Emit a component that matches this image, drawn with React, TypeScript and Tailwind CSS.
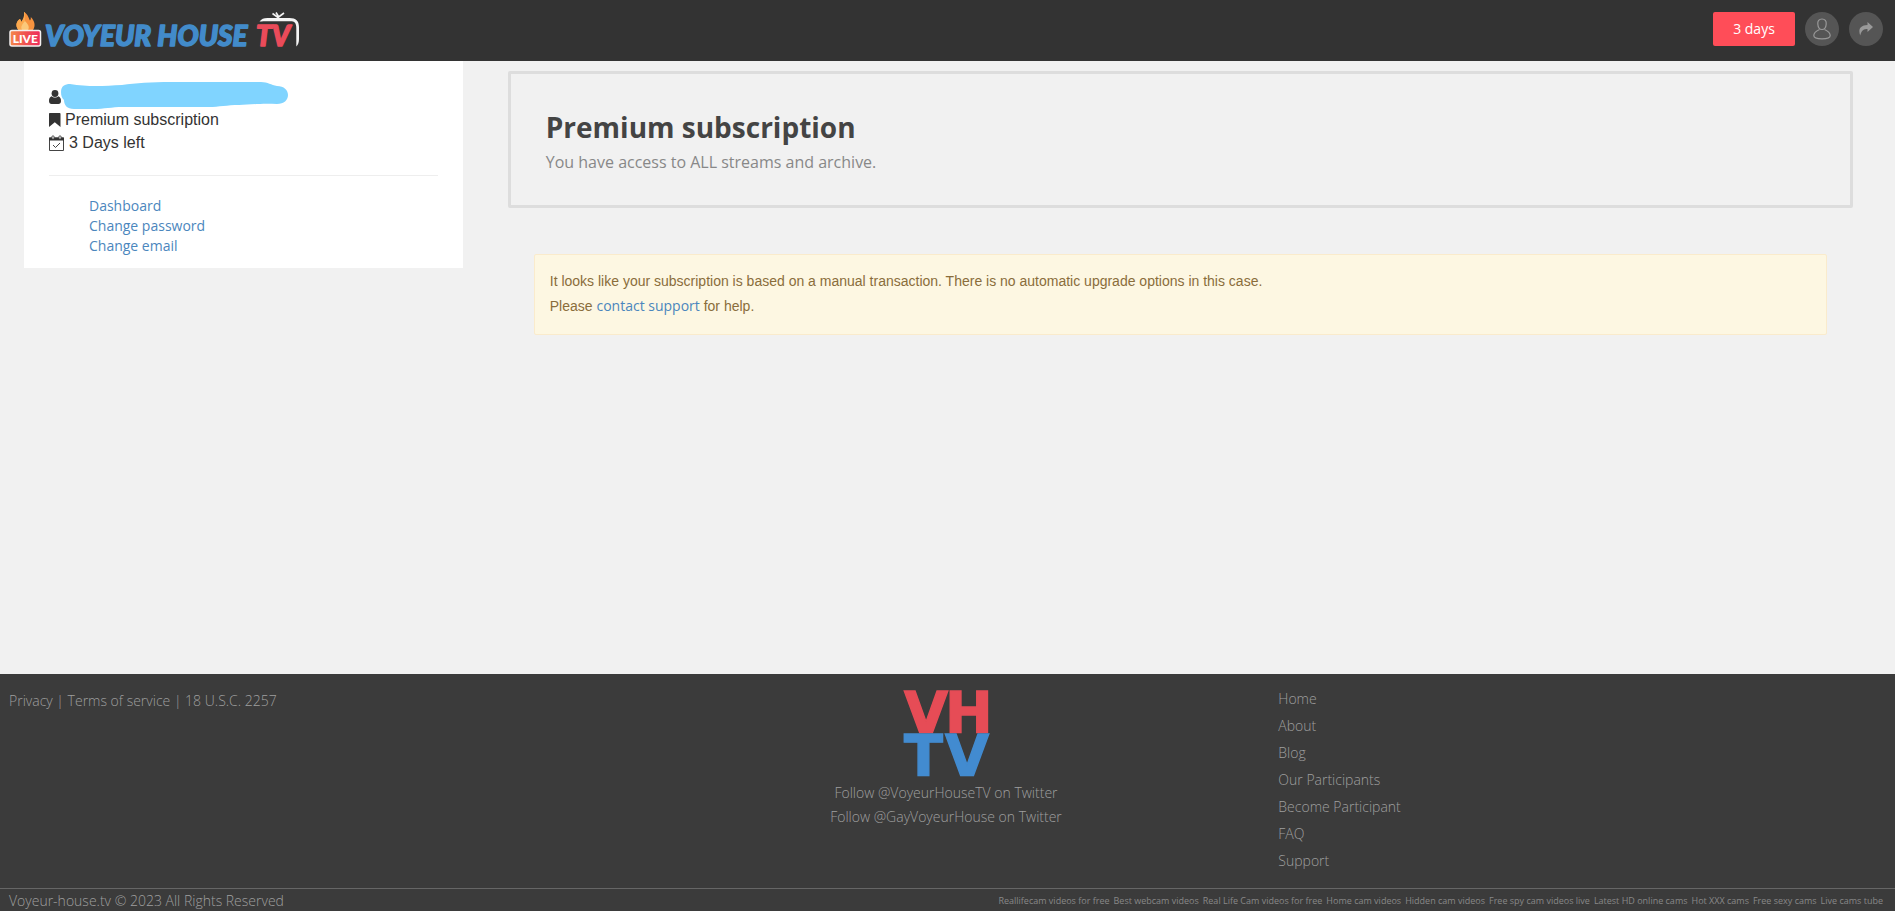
const accountLinks = ['Dashboard', 'Change password', 'Change email'];

const footerLinks = ['Home', 'About', 'Blog', 'Our Participants', 'Become Participant', 'FAQ', 'Support'];

const partnerLinks = [
  'Reallifecam videos for free',
  'Best webcam videos',
  'Real Life Cam videos for free',
  'Home cam videos',
  'Hidden cam videos',
  'Free spy cam videos live',
  'Latest HD online cams',
  'Hot XXX cams',
  'Free sexy cams',
  'Live cams tube',
];

function Logo() {
  return (
    <svg width="300" height="52" viewBox="0 0 300 52" role="img" aria-label="Voyeur House TV">
      <defs>
        <linearGradient id="live" x1="0" x2="1">
          <stop offset="0" stopColor="#f58a4b" />
          <stop offset="0.5" stopColor="#f0524f" />
          <stop offset="1" stopColor="#ee2a5c" />
        </linearGradient>
      </defs>
      {/* Flame */}
      <path d="M24 12c4.500 3 4.500 6 6 8.500.7-1 1-2 .8-3.500 4 4 5 9 2.200 13H18.500c-4-5-1.500-9 1.500-11 .8 1 1.200 2 1.200 3 2.300-3 3.300-6 2.800-10z" fill="#f7933f" />
      <path d="M24 12c.8 4-.5 7-2.800 10 0-1-.4-2-1.200-3-3 2-5.500 6-1.500 11H25V12.800z" fill="#fba94f" />
      <path d="M25 21c3 3 5 6 3 9h-6c-2-4 1-6 3-9z" fill="#fbc87a" />
      <rect x="10" y="30.500" width="30.500" height="15.500" rx="2" fill="url(#live)" stroke="#f4f0f0" strokeWidth="1.500" />
      <text x="25.300" y="43" textAnchor="middle" fontFamily="Lato, sans-serif" fontWeight="900" fontSize="12" fill="#fff">LIVE</text>
      {/* Wordmark */}
      <g fontFamily="Lato, sans-serif" fontStyle="italic" fontWeight="900" fontSize="28" strokeWidth="1.500" strokeLinejoin="round">
        <text x="45" y="46" fill="#428bca" stroke="#428bca">VOYEUR HOUSE</text>
        <text x="256" y="46" fill="#ea4b5a" stroke="#ea4b5a">TV</text>
      </g>
      {/* TV set outline and antenna */}
      <path d="M259.500 21.500c2-2.500 4-3.500 8-3.500h22c6.500 0 9.500 3 9.500 9v12c0 3-.7 5.500-2.700 7.500V28c0-5-1.500-6.800-6.300-6.800h-22c-3.500 0-6 0-8.500.3z" fill="#f4f4f4" />
      <path d="M272.500 13.500l5.500 4 6-4.500M276 12.500l2.500 4" fill="none" stroke="#f4f4f4" strokeWidth="1.600" />
    </svg>
  );
}

function FooterLogo() {
  return (
    <svg className="overflow-visible" width="88" height="88" viewBox="0 0 88 88" role="img" aria-label="VHTV" fontFamily="DejaVu Sans, sans-serif" fontWeight="700" fontSize="57">
      <g strokeWidth="1.400">
        <text y="43" fill="#e64c56" stroke="#e64c56"><tspan x="2">V</tspan><tspan x="43">H</tspan></text>
        <text y="86" fill="#428bd0" stroke="#428bd0"><tspan x="2">T</tspan><tspan x="43">V</tspan></text>
      </g>
    </svg>
  );
}

function UserIcon() {
  return (
    <svg width="12" height="14" viewBox="0 0 12 14" fill="#333">
      <circle cx="6" cy="3.500" r="3.400" />
      <path d="M2.600 6.200C.8 6.800 0 8.500 0 11c0 2 1 3 2.600 3h6.800c1.600 0 2.600-1 2.600-3 0-2.500-.8-4.200-2.600-4.800C8.500 7.100 7.400 7.600 6 7.600s-2.500-.5-3.400-1.400z" />
    </svg>
  );
}

function BookmarkIcon() {
  return (
    <svg width="12" height="14" viewBox="0 0 12 14" fill="#333">
      <path d="M1 0h9.500c.6 0 1 .4 1 1v13L5.800 9.200 0 14V1c0-.6.4-1 1-1z" />
    </svg>
  );
}

function CalendarIcon() {
  return (
    <svg width="15" height="16" viewBox="0 0 15 16" fill="none" stroke="#444">
      <path d="M0.500 3h14v12.500h-14z" />
      <path d="M0 2.500h15v3H0z" fill="#333" stroke="none" />
      <path d="M3 1h2v3H3zM10 1h2v3h-2z" fill="#fff" strokeWidth="0.800" />
      <path d="M4 10l2.500 2.500L11 8" />
    </svg>
  );
}

export default function App() {
  return (
    <div className="min-h-screen flex flex-col bg-[#f1f1f1] font-['Open_Sans',sans-serif] text-sm text-[#333]">
      <header className="h-[61px] shrink-0 flex items-start justify-between bg-[#333] pr-3">
        <a href="#">
          <Logo />
        </a>
        <div className="flex items-center gap-[10px] pt-3">
          <button className="w-[82px] h-[34px] rounded-xs bg-[#ff4d58] text-white font-medium">3 days</button>
          <button aria-label="Account" className="size-[34px] rounded-full bg-[#555] flex items-center justify-center">
            <svg width="18" height="22" viewBox="0 0 18 22" fill="none" stroke="#999" strokeWidth="1.200">
              <path d="M9 1c3 0 4.500 2 4.200 5-.2 3-1.900 5.500-4.200 5.500S5 9 4.800 6C4.500 3 6 1 9 1z" />
              <path d="M6.500 11.500C3 13 .8 14.500.8 17.500c0 2 2 3.300 8.200 3.300s8.200-1.300 8.200-3.300c0-3-2.200-4.500-5.700-6" />
            </svg>
          </button>
          <button aria-label="Share" className="size-[34px] rounded-full bg-[#555] flex items-center justify-center">
            <svg width="14" height="14" viewBox="0 0 14 14" fill="#999">
              <path d="M8.500 0L14 5 8.500 10V7C5 7 2.500 8 1.200 13.500-.8 8 .5 3.200 8.500 3z" />
            </svg>
          </button>
        </div>
      </header>

      <div className="flex-1 flex items-start">
        {/* Account */}
        <aside className="w-1/4 shrink-0 pl-6 pr-[11px]">
          <div className="bg-white px-[25px] pt-6 pb-3">
            <ul className="font-['Liberation_Sans',sans-serif] text-base leading-[23px]">
              <li className="flex items-center h-[23px]">
                <UserIcon />
                <svg className="-mt-1.5 -mb-1" width="228" height="28" viewBox="0 0 228 28">
                  <path d="M0 10C0 4 4 2 9 2c18 3 34 2 52 1C75 1 90 0 110 0h90c7 0 10 3 16 4 7 0 11 4 11 9s-4 9-11 9c-18-1-28 1-38 1-12 0-20 2-30 2H62c-12 0-18 2-30 2H13C6 27 3 23 3 18 1 16 0 14 0 10z" fill="#80d4ff" />
                </svg>
              </li>
              <li className="flex items-center gap-1">
                <BookmarkIcon />
                Premium subscription
              </li>
              <li className="flex items-center gap-[5px]">
                <CalendarIcon />
                3 Days left
              </li>
            </ul>
            <hr className="mt-[21px] mb-5 border-[#eee]" />
            <ul className="pl-10 leading-5 text-[#4b86bd]">
              {accountLinks.map(label => (
                <li key={label}><a href="#">{label}</a></li>
              ))}
            </ul>
          </div>
        </aside>

        {/* Subscription */}
        <main className="flex-1 pl-[34px] pr-[42px] pt-[10px]">
          <section className="rounded-xs border-3 border-[#ddd] px-[35px] pt-[35px] pb-[31px]">
            <h1 className="text-[28px] leading-9 font-bold text-[#444]">Premium subscription</h1>
            <p className="mt-[5px] text-base text-[#888]">You have access to ALL streams and archive.</p>
          </section>
          <div className="mx-[26px] mt-[46px] rounded-xs border border-[#faebcc] bg-[#fdf7e2] px-[15px] pt-[14px] pb-[15px] font-['Liberation_Sans',sans-serif] leading-[25px] text-[#8a6d3b]">
            <p>It looks like your subscription is based on a manual transaction. There is no automatic upgrade options in this case.</p>
            <p>
              Please <a href="#" className="font-['Open_Sans',sans-serif] leading-none text-[#4b86bd]">contact support</a> for help.
            </p>
          </div>
        </main>
      </div>

      <footer className="bg-[#3b3b3b] font-light text-[#9f9f9f]">
        <div className="grid grid-cols-3 pb-[14px]">
          <div className="pl-[9px] pt-[13px] leading-[27px]">
            <a href="#">Privacy</a> | <a href="#">Terms of service</a> | <a href="#">18 U.S.C. 2257</a>
          </div>
          <div className="flex flex-col items-center pt-4 pr-[3px] leading-6">
            <a href="#" className="mb-[3px]"><FooterLogo /></a>
            <a href="#">Follow @VoyeurHouseTV on Twitter</a>
            <a href="#">Follow @GayVoyeurHouse on Twitter</a>
          </div>
          <ul className="pl-[15px] pt-[11px] leading-[27px]">
            {footerLinks.map(label => (
              <li key={label}><a href="#">{label}</a></li>
            ))}
          </ul>
        </div>
        <div className="flex items-center justify-between border-t border-[#666] pl-[9px] pr-3 pt-px leading-[21px]">
          <span>Voyeur-house.tv © 2023 All Rights Reserved</span>
          <nav className="flex gap-1 text-[9px] font-normal text-[#888]">
            {partnerLinks.map(label => (
              <a key={label} href="#">{label}</a>
            ))}
          </nav>
        </div>
      </footer>
    </div>
  );
}
